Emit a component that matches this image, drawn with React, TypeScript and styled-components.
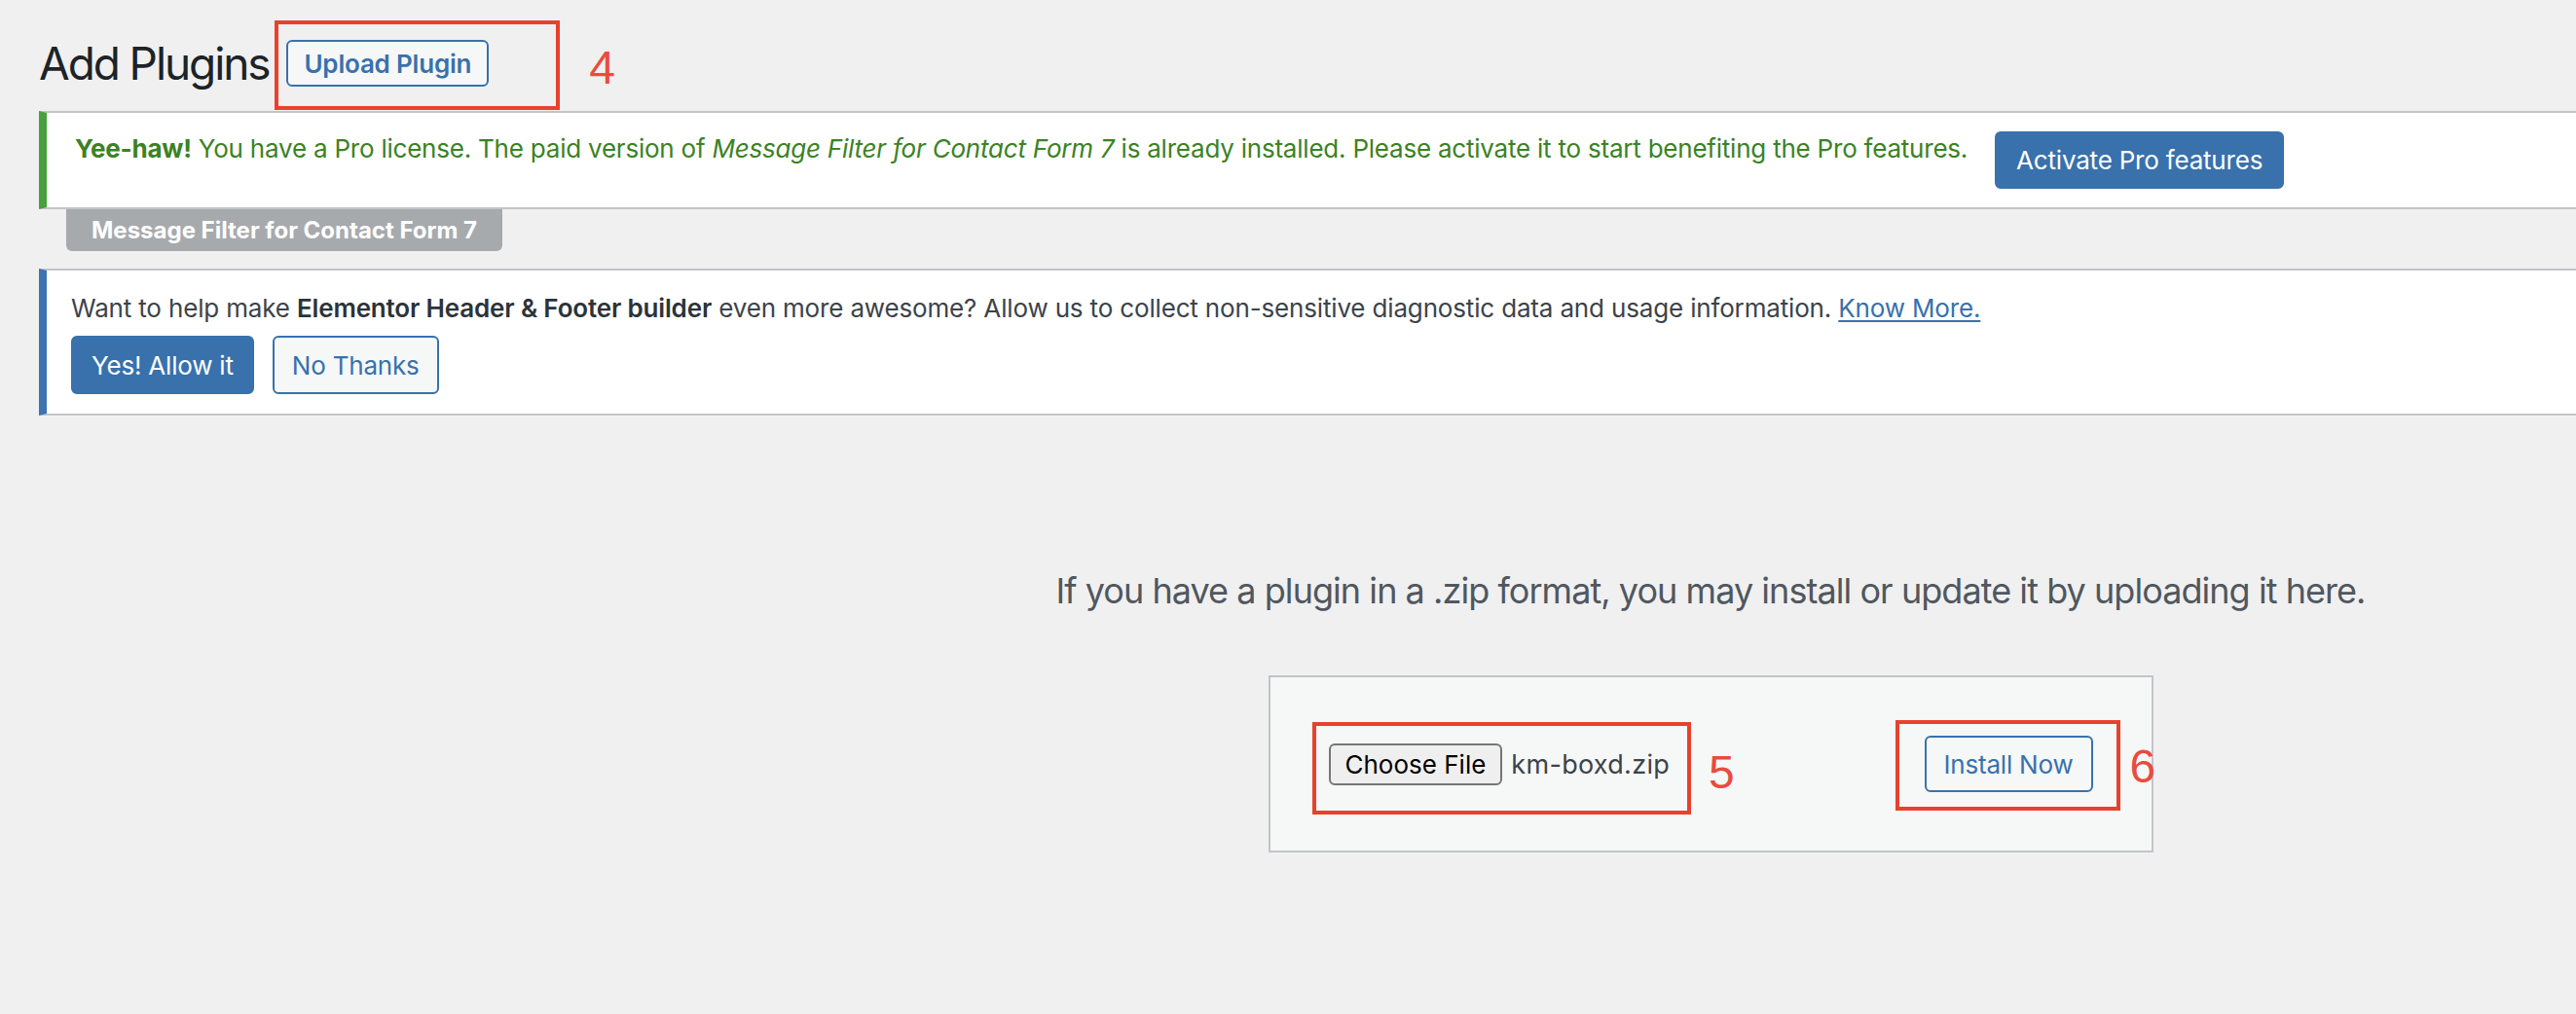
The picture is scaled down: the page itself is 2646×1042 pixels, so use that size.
import React from 'react';
import styled, { createGlobalStyle } from 'styled-components';

const GlobalStyle = createGlobalStyle`
  html, body {
    margin: 0;
    padding: 0;
    background: #f0f0f1;
    overflow: hidden;
  }
  body {
    font-family: Inter, "Noto Sans", sans-serif;
    color: #3c434a;
  }
`

const Page = styled.div`
  width: 3474px;
  min-height: 1042px;
  box-sizing: border-box;
  padding: 35px 0 0 40px;
  display: flex;
  flex-direction: column;
`
const HeaderRow = styled.div`
  display: flex;
  align-items: center;
  gap: 18px;
  height: 60px;
`
const Title = styled.h1`
  margin: 0;
  font-size: 46px;
  font-weight: 400;
  line-height: 60px;
  color: #1d2327;
  letter-spacing: -2.1px;
`
const OutlineButton = styled.button<{ $bold?: boolean; $height: number; $pad: number }>`
  height: ${p => p.$height}px;
  padding: 0 ${p => p.$pad}px;
  background: #f6f7f7;
  border: 2px solid #3871ac;
  border-radius: 6px;
  color: #3871ac;
  font-family: inherit;
  font-size: 26px;
  font-weight: ${p => (p.$bold ? 600 : 400)};
  letter-spacing: -0.2px;
  cursor: pointer;
`
const PrimaryButton = styled.button<{ $height: number; $pad: number }>`
  height: ${p => p.$height}px;
  padding: 0 ${p => p.$pad}px;
  background: #3871ac;
  border: 2px solid #3871ac;
  border-radius: 6px;
  color: #fff;
  font-family: inherit;
  font-size: 26px;
  font-weight: 400;
  letter-spacing: -0.2px;
  cursor: pointer;
  white-space: nowrap;
`
const Notice = styled.div<{ $accent: string; $top: number }>`
  margin-top: ${p => p.$top}px;
  background: #fff;
  border-top: 2px solid #c3c4c7;
  border-bottom: 2px solid #c3c4c7;
  border-left: 8px solid ${p => p.$accent};
`
const ProNotice = styled(Notice)`
  display: flex;
  align-items: flex-start;
  gap: 28px;
  padding: 19px 0 19px 29px;
`
const ProText = styled.p`
  margin: 0;
  font-size: 26px;
  line-height: 36px;
  color: #3b8224;
  letter-spacing: -0.22px;
  strong { font-weight: 700; }
`
const PluginTab = styled.div`
  align-self: flex-start;
  margin-left: 28px;
  height: 43px;
  padding: 0 26px 0 26px;
  background: #a7aaad;
  border-radius: 0 0 6px 6px;
  color: #fff;
  font-size: 24px;
  font-weight: 700;
  line-height: 43px;
`
const OptInNotice = styled(Notice)`
  padding: 21px 0 20px 25px;
`
const OptInText = styled.p`
  margin: 0;
  font-size: 26px;
  line-height: 36px;
  color: #3c434a;
  letter-spacing: -0.16px;
  strong { font-weight: 600; color: #2c3338; }
  a { color: #3871ac; text-decoration: underline; text-underline-offset: 3px; }
`
const ButtonRow = styled.div`
  display: flex;
  gap: 19px;
  margin-top: 10px;
`
const UploadSection = styled.div`
  padding-top: 155px;
  display: flex;
  flex-direction: column;
  align-items: center;
`
const HelpText = styled.p`
  margin: 0;
  font-size: 36px;
  line-height: 50px;
  color: #50575e;
  letter-spacing: -0.95px;
`
const UploadForm = styled.div`
  margin-top: 62px;
  width: 909px;
  box-sizing: border-box;
  padding: 60px;
  display: flex;
  justify-content: space-between;
  align-items: center;
  background: #f6f7f7;
  border: 2px solid #c3c4c7;
`
const FileField = styled.div`
  display: flex;
  align-items: center;
  gap: 9px;
`
const ChooseButton = styled.button`
  height: 43px;
  padding: 0 15px;
  background: #efefef;
  border: 2px solid #767676;
  border-radius: 6px;
  color: #000;
  font-family: inherit;
  font-size: 26px;
`
const FileName = styled.span`
  font-size: 27px;
  letter-spacing: 0.3px;
  color: #3c434a;
`
const Annotated = styled.div`
  position: relative;
  display: inline-flex;
`
const Frame = styled.span<{ $t: number; $r: number; $b: number; $l: number }>`
  position: absolute;
  top: ${p => p.$t}px;
  right: ${p => p.$r}px;
  bottom: ${p => p.$b}px;
  left: ${p => p.$l}px;
  border: 4px solid #e8412c;
  pointer-events: none;
`
const Marker = styled.span<{ $top: number; $gap: number }>`
  position: absolute;
  top: ${p => p.$top}px;
  left: calc(100% + ${p => p.$gap}px);
  font-family: "Liberation Sans", Arial, sans-serif;
  font-size: 48px;
  line-height: 48px;
  color: #e84c3d;
`

export default function App() {
  return (
    <>
      <GlobalStyle />
      <Page>
        <HeaderRow>
          <Title>Add Plugins</Title>
          <Annotated>
            <OutlineButton $bold $height={48} $pad={16}>Upload Plugin</OutlineButton>
            <Frame $t={-20} $r={-73} $b={-24} $l={-12} />
            <Marker $top={5} $gap={103}>4</Marker>
          </Annotated>
        </HeaderRow>

        <ProNotice $accent="#46a13a" $top={19}>
          <ProText>
            <strong>Yee-haw!</strong> You have a Pro license. The paid version of{' '}
            <em>Message Filter for Contact Form 7</em> is already installed. Please activate it to start
            benefiting the Pro features.
          </ProText>
          <PrimaryButton $height={59} $pad={20}>Activate Pro features</PrimaryButton>
        </ProNotice>
        <PluginTab>Message Filter for Contact Form 7</PluginTab>

        <OptInNotice $accent="#3b74b0" $top={18}>
          <OptInText>
            Want to help make <strong>Elementor Header &amp; Footer builder</strong> even more awesome? Allow
            us to collect non-sensitive diagnostic data and usage information. <a href="#">Know More.</a>
          </OptInText>
          <ButtonRow>
            <PrimaryButton $height={60} $pad={19}>Yes! Allow it</PrimaryButton>
            <OutlineButton $height={60} $pad={18}>No Thanks</OutlineButton>
          </ButtonRow>
        </OptInNotice>

        <UploadSection>
          <HelpText>If you have a plugin in a .zip format, you may install or update it by uploading it here.</HelpText>
          <UploadForm>
            <Annotated>
              <FileField>
                <ChooseButton>Choose File</ChooseButton>
                <FileName>km-boxd.zip</FileName>
              </FileField>
              <Frame $t={-22} $r={-22} $b={-30} $l={-17} />
              <Marker $top={6} $gap={40}>5</Marker>
            </Annotated>
            <Annotated>
              <OutlineButton $height={58} $pad={18}>Install Now</OutlineButton>
              <Frame $t={-16} $r={-28} $b={-19} $l={-30} />
              <Marker $top={8} $gap={38}>6</Marker>
            </Annotated>
          </UploadForm>
        </UploadSection>
      </Page>
    </>
  );
}
